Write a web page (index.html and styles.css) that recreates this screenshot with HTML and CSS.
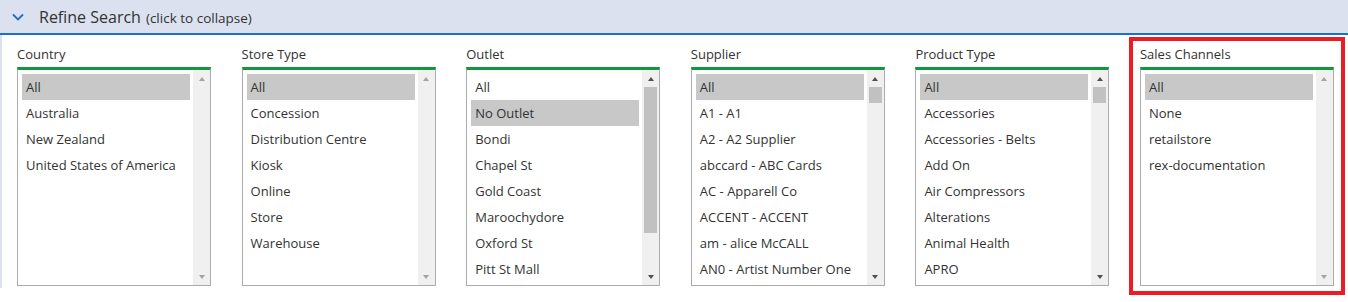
FILE: index.html
```html
<!DOCTYPE html>
<html lang="en">
<head>
    <meta charset="UTF-8">
    <title>Refine Search</title>
    <link rel="stylesheet" href="styles.css">
</head>
<body>

<div class="refine">
    <div class="refine-head">
        <svg class="chevron" width="12" height="8" viewBox="0 0 12 8">
            <polyline points="1,1.5 6,6.5 11,1.5" fill="none" stroke="#1f70c1" stroke-width="1.8"/>
        </svg>
        <span class="refine-title">Refine Search</span>
        <span class="refine-hint">(click to collapse)</span>
    </div>

    <div class="refine-body">

        <div class="filter">
            <div class="filter-label">Country</div>
            <div class="listbox">
                <ul class="options">
                    <li class="selected">All</li>
                    <li>Australia</li>
                    <li>New Zealand</li>
                    <li>United States of America</li>
                </ul>
                <div class="scroll off">
                    <span class="arrow up"></span>
                    <div class="track"></div>
                    <span class="arrow down"></span>
                </div>
            </div>
        </div>

        <div class="filter">
            <div class="filter-label">Store Type</div>
            <div class="listbox">
                <ul class="options">
                    <li class="selected">All</li>
                    <li>Concession</li>
                    <li>Distribution Centre</li>
                    <li>Kiosk</li>
                    <li>Online</li>
                    <li>Store</li>
                    <li>Warehouse</li>
                </ul>
                <div class="scroll off">
                    <span class="arrow up"></span>
                    <div class="track"></div>
                    <span class="arrow down"></span>
                </div>
            </div>
        </div>

        <div class="filter">
            <div class="filter-label">Outlet</div>
            <div class="listbox">
                <ul class="options">
                    <li>All</li>
                    <li class="selected">No Outlet</li>
                    <li>Bondi</li>
                    <li>Chapel St</li>
                    <li>Gold Coast</li>
                    <li>Maroochydore</li>
                    <li>Oxford St</li>
                    <li>Pitt St Mall</li>
                </ul>
                <div class="scroll">
                    <span class="arrow up"></span>
                    <div class="track"><div class="thumb" style="height:146px"></div></div>
                    <span class="arrow down"></span>
                </div>
            </div>
        </div>

        <div class="filter">
            <div class="filter-label">Supplier</div>
            <div class="listbox">
                <ul class="options">
                    <li class="selected">All</li>
                    <li>A1 - A1</li>
                    <li>A2 - A2 Supplier</li>
                    <li>abccard - ABC Cards</li>
                    <li>AC - Apparell Co</li>
                    <li>ACCENT - ACCENT</li>
                    <li>am - alice McCALL</li>
                    <li>AN0 - Artist Number One</li>
                </ul>
                <div class="scroll">
                    <span class="arrow up"></span>
                    <div class="track"><div class="thumb" style="height:16px"></div></div>
                    <span class="arrow down"></span>
                </div>
            </div>
        </div>

        <div class="filter">
            <div class="filter-label">Product Type</div>
            <div class="listbox">
                <ul class="options">
                    <li class="selected">All</li>
                    <li>Accessories</li>
                    <li>Accessories - Belts</li>
                    <li>Add On</li>
                    <li>Air Compressors</li>
                    <li>Alterations</li>
                    <li>Animal Health</li>
                    <li>APRO</li>
                </ul>
                <div class="scroll">
                    <span class="arrow up"></span>
                    <div class="track"><div class="thumb" style="height:16px"></div></div>
                    <span class="arrow down"></span>
                </div>
            </div>
        </div>

        <div class="filter flagged">
            <div class="filter-label">Sales Channels</div>
            <div class="listbox">
                <ul class="options">
                    <li class="selected">All</li>
                    <li>None</li>
                    <li>retailstore</li>
                    <li>rex-documentation</li>
                </ul>
                <div class="scroll off">
                    <span class="arrow up"></span>
                    <div class="track"></div>
                    <span class="arrow down"></span>
                </div>
            </div>
        </div>

    </div>
</div>

</body>
</html>
```

FILE: styles.css
```css
html, body {
    min-height: 302px;
}

body {
    margin: 0;
    font-family: "Open Sans", "Liberation Sans", sans-serif;
    color: #333;
    background-color: #fff;
}

.refine {
    background-color: #dbe1ee;
    padding-left: 2px;
}

.refine-head {
    height: 33px;
    display: flex;
    align-items: center;
    border-bottom: 2px solid #1b72c4;
    margin-left: -2px;
    padding-left: 12px;
}

.chevron {
    margin-right: 15px;
    margin-top: 1px;
}

.refine-title {
    font-size: 16px;
    color: #333;
}

.refine-hint {
    font-size: 13.5px;
    margin-left: 5px;
    margin-top: 2px;
}

.refine-body {
    background-color: #fff;
    display: flex;
    justify-content: space-between;
    padding: 10px 14px 2px 15px;
}

.filter {
    width: 194px;
    position: relative;
}

.filter-label {
    font-size: 13px;
    line-height: 18px;
    margin-bottom: 4px;
}

.listbox {
    height: 215px;
    border: 1px solid #ababab;
    border-top: 3px solid #13973d;
    display: flex;
}

.options {
    list-style: none;
    margin: 0;
    padding: 4px 3px 0 4px;
    flex: 1;
    overflow: hidden;
}

.options li {
    font-size: 13px;
    line-height: 26px;
    height: 26px;
    padding-left: 4px;
    white-space: nowrap;
}

.options li.selected {
    background-color: #c8c8c8;
}

.scroll {
    width: 17px;
    background-color: #f0f0f0;
    display: flex;
    flex-direction: column;
}

.track {
    flex: 1;
    padding: 0 2px;
}

.thumb {
    background-color: #c1c1c1;
}

.arrow {
    height: 17px;
    display: flex;
    align-items: center;
    justify-content: center;
}

.arrow::before {
    content: "";
    border-left: 3.5px solid transparent;
    border-right: 3.5px solid transparent;
}

.arrow.up::before {
    border-bottom: 4px solid #505050;
}

.arrow.down::before {
    border-top: 4px solid #505050;
}

.scroll.off .arrow.up::before {
    border-bottom-color: #a3a3a3;
}

.scroll.off .arrow.down::before {
    border-top-color: #a3a3a3;
}

.flagged::after {
    content: "";
    position: absolute;
    left: -11px;
    right: -11px;
    top: -8px;
    bottom: -9px;
    border: 4px solid #ed1c24;
}
```
